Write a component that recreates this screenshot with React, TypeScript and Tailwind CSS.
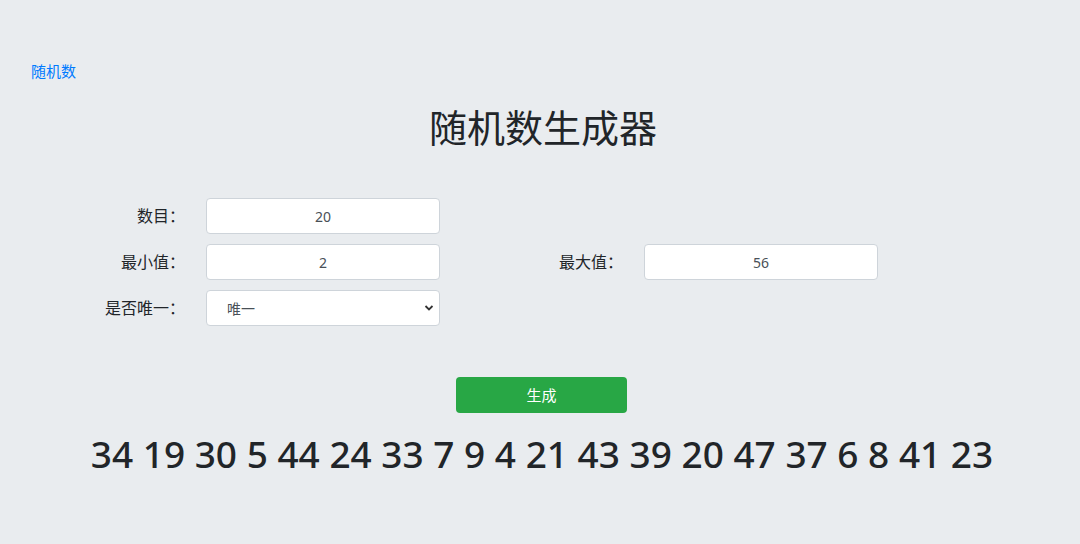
import React from "react";

const font = { fontFamily: '"Noto Sans", "Noto Sans CJK SC", sans-serif' };

export default function App() {
  const nums = [34, 19, 30, 5, 44, 24, 33, 7, 9, 4, 21, 43, 39, 20, 47, 37, 6, 8, 41, 23];
  return (
    <div className="w-[1080px] h-[544px] bg-[#e9ecef] text-[#212529] flex flex-col" style={font}>
      <div className="pt-[59px] pl-[31px] text-[15px] leading-[24px]">
        <a href="#" className="text-[#007bff]">随机数</a>
      </div>
      <h1 className="mt-[20px] text-center text-[38px] leading-[48px] font-normal pl-[6px]">随机数生成器</h1>
      <div className="mt-[47px] flex flex-col gap-[10px] text-[15px]">
        <div className="flex items-center h-[36px]">
          <label className="w-[185px] text-right text-[16px]">数目：</label>
          <input
            defaultValue="20"
            className="ml-[21px] w-[234px] h-[36px] bg-white border border-[#ced4da] rounded-[4px] text-center text-[14px] text-[#495057] outline-none"
            style={font}
          />
        </div>
        <div className="flex items-center h-[36px]">
          <label className="w-[185px] text-right text-[16px]">最小值：</label>
          <input
            defaultValue="2"
            className="ml-[21px] w-[234px] h-[36px] bg-white border border-[#ced4da] rounded-[4px] text-center text-[14px] text-[#495057] outline-none"
            style={font}
          />
          <label className="w-[183px] text-right text-[16px]">最大值：</label>
          <input
            defaultValue="56"
            className="ml-[21px] w-[234px] h-[36px] bg-white border border-[#ced4da] rounded-[4px] text-center text-[14px] text-[#495057] outline-none"
            style={font}
          />
        </div>
        <div className="flex items-center h-[36px]">
          <label className="w-[185px] text-right text-[16px]">是否唯一：</label>
          <div className="ml-[21px] relative w-[234px] h-[36px]">
            <select
              className="appearance-none w-full h-full bg-white border border-[#ced4da] rounded-[4px] pl-[20px] text-[14px] text-[#495057] outline-none"
              style={font}
            >
              <option>唯一</option>
              <option>不唯一</option>
            </select>
            <svg className="absolute right-[6px] top-[14px] pointer-events-none" width="10" height="8" viewBox="0 0 10 8">
              <path d="M1.5 2 L5 5.5 L8.5 2" fill="none" stroke="#333" strokeWidth="1.8" />
            </svg>
          </div>
        </div>
      </div>
      <div className="mt-[51px] flex justify-center">
        <button
          className="w-[171px] h-[36px] bg-[#28a745] text-white rounded-[4px] text-[15px] ml-[3px]"
          style={font}
        >
          生成
        </button>
      </div>
      <div className="mt-[17px] text-center text-[37px] leading-[48px] font-medium pl-[4px]">
        {nums.join(" ")}
      </div>
    </div>
  );
}
